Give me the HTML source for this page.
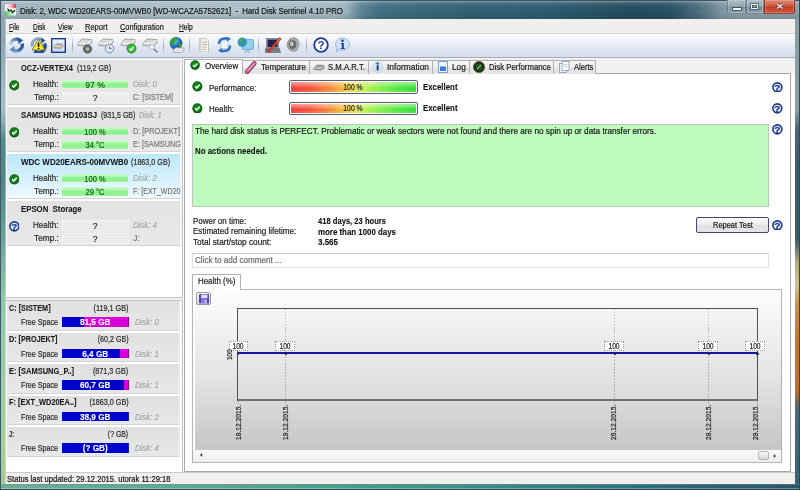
<!DOCTYPE html>
<html><head><meta charset="utf-8"><style>
*{margin:0;padding:0;box-sizing:border-box}
html,body{width:800px;height:490px;overflow:hidden;background:#9db2bd}
body{position:relative;font-family:"Liberation Sans",sans-serif;color:#1e1e1e}
.a{position:absolute}
.t{position:absolute;white-space:nowrap;line-height:1;-webkit-text-stroke:0.2px currentColor}
.t.b{-webkit-text-stroke:0.1px currentColor}
.b{font-weight:bold}
.gray{color:#7a7a7a}
.it{font-style:italic;color:#a8a8a8}
.chk{position:absolute;width:11px;height:11px;border-radius:50%;background:radial-gradient(circle at 50% 45%,#1e8a1e 0,#0e6a0e 55%,#054005 100%)}
.chk:after{content:"";position:absolute;left:3px;top:2.2px;width:5px;height:2.6px;border-left:1.8px solid #e8ffe8;border-bottom:1.8px solid #e8ffe8;transform:rotate(-45deg)}
.q{position:absolute;width:11px;height:11px;border-radius:50%;border:1.4px solid #234a9e;background:radial-gradient(#fff 50%,#dfe8f8);}
.q:after{content:"?";position:absolute;left:0;right:0;top:0.5px;text-align:center;font:bold 8px/8px "Liberation Sans",sans-serif;color:#234a9e}
.gbar{position:absolute;background:linear-gradient(#d2f9d2 0,#a6f3a6 30%,#86ec86 55%,#92ee92 80%,#b8f3b8 100%);color:#1a5a1a;text-align:center;line-height:1}
.ebar{position:absolute;background:linear-gradient(#f0f0f0,#e6e6e6);border:1px solid #f8f8f8;color:#333;text-align:center;line-height:1}
.card{position:absolute;left:7px;width:174px;height:45px;background:linear-gradient(#e2e2e2,#e9e9e9);border-right:1px solid #f0f0f0;border-bottom:1px solid #d4d4d4}
.card.sel{background:linear-gradient(#bde7f9 0,#d4f0fb 50%,#eef9fe 100%)}
.vol{position:absolute;left:7px;width:173px;height:29.5px;background:linear-gradient(#e0e0e0,#e8e8e8);border-right:1px solid #f0f0f0;border-bottom:1px solid #d4d4d4}
.fs{position:absolute;background:#0000cc;color:#fff;font-weight:bold;text-align:center;line-height:1}
.tab{position:absolute;background:linear-gradient(#f6f6f6,#e2e2e2);border:1px solid #a2a2a2;border-bottom:none}
.pbar{position:absolute;border:1px solid #58606e;border-radius:2px;background:#fafafa;padding:1px}
.pbar>div{position:relative;width:100%;height:100%;background:linear-gradient(rgba(255,255,255,.5) 0,rgba(255,255,255,.2) 40%,rgba(255,255,255,0) 60%,rgba(255,255,255,.12) 100%),linear-gradient(90deg,#f03c3c 0,#f25038 15%,#f28a34 31%,#f2c040 43%,#e0e050 52%,#c0f050 58%,#88ee48 70%,#50e640 85%,#30e030 100%)}
</style></head><body><div style="position:absolute;left:0;top:0;width:800px;height:490px;overflow:hidden;filter:blur(0.4px)">
<div class="a " style="left:0px;top:0px;width:800px;height:490px;background:#8fa5b0"></div>
<div class="a " style="left:0px;top:0px;width:6px;height:490px;background:linear-gradient(#8fa5b0 0,#8fa5b0 40px,#9ab0ba 70px,#a8c0c8 105px,#8aaeb4 122px,#4e8a88 140px,#4a8886 175px,#5a9490 210px,#74aa9c 250px,#90c8a8 300px,#98cca4 360px,#a8d098 440px,#a0c890 490px)"></div>
<div class="a " style="left:5px;top:19px;width:1px;height:466px;background:rgba(255,255,255,.35)"></div>
<div class="a " style="left:794px;top:0px;width:6px;height:490px;background:linear-gradient(#8a9ea8 0,#8a9ea8 110px,#4a6676 130px,#3a5a6a 170px,#3c5c6a 240px,#b0aa80 262px,#cec690 285px,#c89050 305px,#c07830 340px,#b87030 390px,#4a6a78 410px,#3a6070 490px)"></div>
<div class="a " style="left:794px;top:19px;width:1px;height:466px;background:rgba(255,255,255,.5)"></div>
<div class="a " style="left:0px;top:484px;width:800px;height:6px;background:linear-gradient(90deg,#6aae90 0,#5aa88a 200px,#4aa088 320px,#3a8c84 480px,#2e7a80 600px,#2a6070 720px,#2a5868 800px)"></div>
<div class="a " style="left:0px;top:484px;width:800px;height:1px;background:rgba(120,140,150,.5)"></div>
<div class="a " style="left:0px;top:488px;width:800px;height:1px;background:rgba(255,255,255,.3)"></div>
<div class="a " style="left:0px;top:0px;width:800px;height:19px;background:linear-gradient(90deg,#9cb1bc 0,#a2b6c0 330px,#9ab0ba 346px,#5f8696 360px,#427083 380px,#3a687b 420px,#336174 470px,#2f5d72 540px,#2a5468 590px,#264b5f 630px,#2a5063 670px,#4d6f80 700px,#7d95a0 722px,#8a9ea8 740px,#8a9ea8 800px)"></div>
<div class="a " style="left:0px;top:0px;width:800px;height:19px;background:linear-gradient(rgba(255,255,255,0) 0,rgba(255,255,255,.22) 2px,rgba(255,255,255,.08) 4px,rgba(255,255,255,0) 8px,rgba(0,0,0,0) 12px,rgba(0,0,0,.07) 17px,rgba(0,0,0,.1) 19px)"></div>
<div class="a " style="left:0px;top:0px;width:800px;height:1px;background:#3a5564"></div>
<div class="a " style="left:0px;top:1px;width:800px;height:1px;background:rgba(255,255,255,.2)"></div>
<div class="a " style="left:0px;top:0px;width:1px;height:490px;background:#3f5a68"></div>
<div class="a " style="left:799px;top:0px;width:1px;height:490px;background:#2f4653"></div>
<div class="a " style="left:0px;top:489px;width:800px;height:1px;background:#2f4653"></div>
<div class="a " style="left:16px;top:3px;width:335px;height:14px;background:radial-gradient(ellipse 55% 70% at 50% 50%,rgba(190,205,212,.55) 0,rgba(180,198,206,.35) 75%,rgba(170,190,200,0) 100%)"></div>
<div class="t " style="left:20px;top:6.94px;font-size:8.42px;transform:scaleX(0.9226);transform-origin:0 0;color:#141414">Disk: 2, WDC WD20EARS-00MVWB0 [WD-WCAZA5752621]&nbsp; - &nbsp;Hard Disk Sentinel 4.10 PRO</div>
<svg class="a" style="left:5px;top:4.3px" width="11" height="11.5" viewBox="0 0 11 11.5"><defs><linearGradient id="ai1" x1="0" y1="0" x2="1" y2="0"><stop offset="0" stop-color="#f4f4fa"/><stop offset="0.5" stop-color="#f8c8d0"/><stop offset="1" stop-color="#e83048"/></linearGradient><linearGradient id="ai2" x1="0" y1="0" x2="1" y2="0"><stop offset="0" stop-color="#40d050"/><stop offset="0.55" stop-color="#b8f0b8"/><stop offset="1" stop-color="#f8f4fc"/></linearGradient></defs><rect x="0" y="0" width="11" height="4" fill="url(#ai1)"/><rect x="0" y="4" width="11" height="3.5" fill="#eef0ea"/><rect x="0" y="7.5" width="11" height="4" fill="url(#ai2)"/><path d="M2.5 4.5 L4 7 L6 6 L7.5 8.5 L10 6.2" fill="none" stroke="#1a2a1a" stroke-width="1.3"/></svg>
<div class="a " style="left:726.5px;top:0px;width:19px;height:13.5px;background:linear-gradient(#a9bac3 0,#98abb5 45%,#7a8e98 55%,#8ca0aa 100%);border:1px solid rgba(70,90,100,.45);border-top:none;border-radius:0 0 0 3px;box-shadow:inset 0 0 0 1px rgba(255,255,255,.22)"></div>
<div class="a " style="left:733px;top:7.5px;width:7.5px;height:2.2px;background:#f4f4f4;box-shadow:0 0 0 0.8px rgba(30,40,50,.7)"></div>
<div class="a " style="left:745.5px;top:0px;width:18px;height:13.5px;background:linear-gradient(#a9bac3 0,#98abb5 45%,#7a8e98 55%,#8ca0aa 100%);border:1px solid rgba(70,90,100,.45);border-top:none;box-shadow:inset 0 0 0 1px rgba(255,255,255,.22)"></div>
<div class="a " style="left:750.8px;top:4.2px;width:7px;height:5.3px;border:1px solid #f4f4f4;border-top-width:1.5px;box-shadow:0 0 0 0.7px rgba(30,40,50,.7),inset 0 0 0 0.7px rgba(30,40,50,.7)"></div>
<div class="a " style="left:763.5px;top:0px;width:31.5px;height:13.5px;background:linear-gradient(#dc8c7a 0,#d2664c 35%,#c43e22 55%,#d05a3e 100%);border:1px solid rgba(80,30,20,.6);border-top:none;border-radius:0 0 3px 0;box-shadow:inset 0 0 0 1px rgba(255,200,180,.3)"></div>
<svg class="a" style="left:775.8px;top:3.4px" width="7.5" height="6.5" viewBox="0 0 7.5 6.5"><path d="M1 1 L6.5 5.5 M6.5 1 L1 5.5" stroke="#5a2a20" stroke-width="2.4"/><path d="M1 1 L6.5 5.5 M6.5 1 L1 5.5" stroke="#fff" stroke-width="1.3"/></svg>
<div class="a " style="left:6px;top:19px;width:789px;height:1px;background:rgba(40,60,70,.45)"></div>
<div class="a " style="left:6px;top:19px;width:789px;height:465px;background:#f0f0f0"></div>
<div class="a " style="left:6px;top:19px;width:789px;height:15px;background:#f0efed"></div>
<div class="a " style="left:6px;top:33px;width:789px;height:1px;background:#d6d2ce"></div>
<div class="t " style="left:9px;top:23.62px;font-size:8.21px;transform:scaleX(0.7934);transform-origin:0 0;color:#1a1a1a"><u>F</u>ile</div>
<div class="t " style="left:32.5px;top:23.62px;font-size:8.21px;transform:scaleX(0.7828);transform-origin:0 0;color:#1a1a1a"><u>D</u>isk</div>
<div class="t " style="left:58px;top:23.62px;font-size:8.21px;transform:scaleX(0.8220);transform-origin:0 0;color:#1a1a1a"><u>V</u>iew</div>
<div class="t " style="left:85px;top:23.62px;font-size:8.21px;transform:scaleX(0.9131);transform-origin:0 0;color:#1a1a1a"><u>R</u>eport</div>
<div class="t " style="left:120px;top:23.62px;font-size:8.21px;transform:scaleX(0.8963);transform-origin:0 0;color:#1a1a1a"><u>C</u>onfiguration</div>
<div class="t " style="left:178.75px;top:23.62px;font-size:8.21px;transform:scaleX(0.8141);transform-origin:0 0;color:#1a1a1a"><u>H</u>elp</div>
<div class="a " style="left:6px;top:34px;width:789px;height:23px;background:linear-gradient(#fcfcfe 0,#eef1f8 35%,#dfe5f1 60%,#d6ddec 100%)"></div>
<div class="a " style="left:6px;top:57px;width:789px;height:1px;background:#a8afba"></div>
<div class="a " style="left:6px;top:58px;width:789px;height:1px;background:#e8ecf2"></div>
<div class="a " style="left:6px;top:59px;width:177px;height:238px;background:#fff"></div>
<div class="a " style="left:6px;top:297px;width:177px;height:3px;background:#f0f0f0"></div>
<div class="a " style="left:6px;top:300px;width:177px;height:172px;background:#fff"></div>
<div class="card" style="top:60px"></div>
<div class="t b" style="left:21.3px;top:64.14px;font-size:8.42px;transform:scaleX(0.8835);transform-origin:0 0;color:#1a1a1a">OCZ-VERTEX4</div>
<div class="t " style="left:77.2px;top:64.14px;font-size:8.42px;transform:scaleX(0.8395);transform-origin:0 0;color:#2a2a2a">(119,2 GB)</div>
<svg class="a" style="left:8.6px;top:80px" width="10.7" height="10.7" viewBox="0 0 10.7 10.7"><defs><radialGradient id="cg" cx="0.5" cy="0.45" r="0.55"><stop offset="0" stop-color="#23922a"/><stop offset="0.7" stop-color="#12701a"/><stop offset="1" stop-color="#06480a"/></radialGradient></defs><circle cx="5.35" cy="5.35" r="5.05" fill="url(#cg)"/><path d="M3.10 5.35 L4.71 7.06 L7.81 3.64" fill="none" stroke="#d8ffd8" stroke-width="1.60"/></svg>
<div class="t " style="left:32.8px;top:79.94px;font-size:8.42px;transform:scaleX(0.9534);transform-origin:0 0;color:#2a2a2a">Health:</div>
<div class="t " style="left:34px;top:93.14px;font-size:8.42px;transform:scaleX(0.9867);transform-origin:0 0;color:#2a2a2a">Temp.:</div>
<div class="a " style="left:62px;top:79.5px;width:66px;height:8.5px;background:linear-gradient(#d0fbd0 0,#b0f7b0 30%,#8cf28c 55%,#92f292 85%,#b0f4b0 100%)"></div>
<div class="t " style="left:-5px;width:200px;text-align:center;top:80.54px;font-size:8.42px;transform:scaleX(1.0275);transform-origin:50% 0;color:#0e560e;-webkit-text-stroke:0.15px #0e560e">97 %</div>
<div class="a " style="left:61.5px;top:92px;width:67px;height:11px;background:linear-gradient(#ededed,#e9e9e9);border:1px solid #f2f2f2"></div>
<div class="t " style="left:-5px;width:200px;text-align:center;top:93.94px;font-size:8.42px;color:#222">?</div>
<div class="t it" style="left:133px;top:79.94px;font-size:8.42px;transform:scaleX(0.9260);transform-origin:0 0;">Disk: 0</div>
<div class="t gray" style="left:133.3px;top:93.14px;font-size:8.42px;transform:scaleX(0.8540);transform-origin:0 0;">C: [SISTEM]</div>
<div class="card" style="top:107px"></div>
<div class="t b" style="left:21.3px;top:111.14px;font-size:8.42px;transform:scaleX(0.9295);transform-origin:0 0;color:#1a1a1a">SAMSUNG HD103SJ</div>
<div class="t " style="left:101px;top:111.14px;font-size:8.42px;transform:scaleX(0.8365);transform-origin:0 0;color:#2a2a2a">(931,5 GB)</div>
<svg class="a" style="left:8.6px;top:127px" width="10.7" height="10.7" viewBox="0 0 10.7 10.7"><defs><radialGradient id="cg" cx="0.5" cy="0.45" r="0.55"><stop offset="0" stop-color="#23922a"/><stop offset="0.7" stop-color="#12701a"/><stop offset="1" stop-color="#06480a"/></radialGradient></defs><circle cx="5.35" cy="5.35" r="5.05" fill="url(#cg)"/><path d="M3.10 5.35 L4.71 7.06 L7.81 3.64" fill="none" stroke="#d8ffd8" stroke-width="1.60"/></svg>
<div class="t " style="left:32.8px;top:126.94px;font-size:8.42px;transform:scaleX(0.9534);transform-origin:0 0;color:#2a2a2a">Health:</div>
<div class="t " style="left:34px;top:140.14px;font-size:8.42px;transform:scaleX(0.9867);transform-origin:0 0;color:#2a2a2a">Temp.:</div>
<div class="a " style="left:62px;top:126.5px;width:66px;height:8.5px;background:linear-gradient(#d0fbd0 0,#b0f7b0 30%,#8cf28c 55%,#92f292 85%,#b0f4b0 100%)"></div>
<div class="t " style="left:-5px;width:200px;text-align:center;top:127.54px;font-size:8.42px;transform:scaleX(0.8975);transform-origin:50% 0;color:#0e560e;-webkit-text-stroke:0.15px #0e560e">100 %</div>
<div class="a " style="left:62px;top:140px;width:66px;height:8.5px;background:linear-gradient(#d0fbd0 0,#b0f7b0 30%,#8cf28c 55%,#92f292 85%,#b0f4b0 100%)"></div>
<div class="t " style="left:-5px;width:200px;text-align:center;top:140.94px;font-size:8.42px;transform:scaleX(0.8994);transform-origin:50% 0;color:#0e560e;-webkit-text-stroke:0.15px #0e560e">34 °C</div>
<div class="t gray" style="left:133.3px;top:126.94px;font-size:8.42px;transform:scaleX(0.8674);transform-origin:0 0;">D: [PROJEKT]</div>
<div class="t gray" style="left:133.3px;top:140.14px;font-size:8.42px;transform:scaleX(0.8707);transform-origin:0 0;">E: [SAMSUNG</div>
<div class="card sel" style="top:154px"></div>
<div class="t b" style="left:21.3px;top:158.14px;font-size:8.42px;transform:scaleX(0.9524);transform-origin:0 0;color:#1a1a1a">WDC WD20EARS-00MVWB0</div>
<div class="t " style="left:131.4px;top:158.14px;font-size:8.42px;transform:scaleX(0.8538);transform-origin:0 0;color:#2a2a2a">(1863,0 GB)</div>
<svg class="a" style="left:8.6px;top:174px" width="10.7" height="10.7" viewBox="0 0 10.7 10.7"><defs><radialGradient id="cg" cx="0.5" cy="0.45" r="0.55"><stop offset="0" stop-color="#23922a"/><stop offset="0.7" stop-color="#12701a"/><stop offset="1" stop-color="#06480a"/></radialGradient></defs><circle cx="5.35" cy="5.35" r="5.05" fill="url(#cg)"/><path d="M3.10 5.35 L4.71 7.06 L7.81 3.64" fill="none" stroke="#d8ffd8" stroke-width="1.60"/></svg>
<div class="t " style="left:32.8px;top:173.94px;font-size:8.42px;transform:scaleX(0.9534);transform-origin:0 0;color:#2a2a2a">Health:</div>
<div class="t " style="left:34px;top:187.14px;font-size:8.42px;transform:scaleX(0.9867);transform-origin:0 0;color:#2a2a2a">Temp.:</div>
<div class="a " style="left:62px;top:173.5px;width:66px;height:8.5px;background:linear-gradient(#d0fbd0 0,#b0f7b0 30%,#8cf28c 55%,#92f292 85%,#b0f4b0 100%)"></div>
<div class="t " style="left:-5px;width:200px;text-align:center;top:174.54px;font-size:8.42px;transform:scaleX(0.8975);transform-origin:50% 0;color:#0e560e;-webkit-text-stroke:0.15px #0e560e">100 %</div>
<div class="a " style="left:62px;top:187px;width:66px;height:8.5px;background:linear-gradient(#d0fbd0 0,#b0f7b0 30%,#8cf28c 55%,#92f292 85%,#b0f4b0 100%)"></div>
<div class="t " style="left:-5px;width:200px;text-align:center;top:187.94px;font-size:8.42px;transform:scaleX(0.8994);transform-origin:50% 0;color:#0e560e;-webkit-text-stroke:0.15px #0e560e">29 °C</div>
<div class="t it" style="left:133px;top:173.94px;font-size:8.42px;transform:scaleX(0.9260);transform-origin:0 0;">Disk: 2</div>
<div class="t gray" style="left:133.3px;top:187.14px;font-size:8.42px;transform:scaleX(0.8402);transform-origin:0 0;">F: [EXT_WD20</div>
<div class="card" style="top:201px"></div>
<div class="t b" style="left:21.3px;top:205.14px;font-size:8.42px;transform:scaleX(0.9265);transform-origin:0 0;color:#1a1a1a">EPSON&nbsp;&nbsp;Storage</div>
<svg class="a" style="left:8.6px;top:221px" width="10.7" height="10.7" viewBox="0 0 10.7 10.7"><defs><radialGradient id="qg" cx="0.45" cy="0.4" r="0.6"><stop offset="0" stop-color="#fff"/><stop offset="1" stop-color="#d8e4f4"/></radialGradient></defs><circle cx="5.35" cy="5.35" r="4.5" fill="url(#qg)" stroke="#1c3a8e" stroke-width="1.6"/><text x="5.35" y="8.99" text-anchor="middle" font-family="Liberation Sans" font-weight="bold" font-size="9.84" fill="#1c3a8e" stroke="#1c3a8e" stroke-width="0.3">?</text></svg>
<div class="t " style="left:32.8px;top:220.94px;font-size:8.42px;transform:scaleX(0.9534);transform-origin:0 0;color:#2a2a2a">Health:</div>
<div class="t " style="left:34px;top:234.14px;font-size:8.42px;transform:scaleX(0.9867);transform-origin:0 0;color:#2a2a2a">Temp.:</div>
<div class="a " style="left:61.5px;top:219.5px;width:67px;height:11px;background:linear-gradient(#ededed,#e9e9e9);border:1px solid #f2f2f2"></div>
<div class="t " style="left:-5px;width:200px;text-align:center;top:221.54px;font-size:8.42px;color:#222">?</div>
<div class="a " style="left:61.5px;top:233px;width:67px;height:11px;background:linear-gradient(#ededed,#e9e9e9);border:1px solid #f2f2f2"></div>
<div class="t " style="left:-5px;width:200px;text-align:center;top:234.94px;font-size:8.42px;color:#222">?</div>
<div class="t it" style="left:133px;top:220.94px;font-size:8.42px;transform:scaleX(0.9260);transform-origin:0 0;">Disk: 4</div>
<div class="t gray" style="left:133.3px;top:234.14px;font-size:8.42px;">J:</div>
<div class="t it" style="left:139px;top:111.14px;font-size:8.42px;transform:scaleX(0.8754);transform-origin:0 0;">Disk: 1</div>
<div class="vol" style="top:301px"></div>
<div class="t b" style="left:9px;top:304.72px;font-size:8.21px;transform:scaleX(0.8863);transform-origin:0 0;color:#1a1a1a">C: [SISTEM]</div>
<div class="t " style="right:671.7px;top:304.72px;font-size:8.21px;transform:scaleX(0.8857);transform-origin:100% 0;color:#2a2a2a">(119,1 GB)</div>
<div class="t " style="left:21px;top:319.32px;font-size:8.21px;transform:scaleX(0.8749);transform-origin:0 0;color:#2a2a2a">Free Space</div>
<div class="a " style="left:61.6px;top:317.2px;width:67px;height:9.6px;background:#0000cc;border-right:1px solid #202090"></div>
<div class="a " style="left:83.5px;top:317.2px;width:45.099999999999994px;height:9.6px;background:linear-gradient(#e000e0,#d000d0);border-right:1px solid #900090"></div>
<div class="t b" style="left:-4.799999999999997px;width:200px;text-align:center;top:319.22px;font-size:8.21px;color:#fff">81,5 GB</div>
<div class="t it" style="left:135px;top:319.32px;font-size:8.21px;transform:scaleX(0.9470);transform-origin:0 0;">Disk: 0</div>
<div class="vol" style="top:332.5px"></div>
<div class="t b" style="left:9px;top:336.22px;font-size:8.21px;transform:scaleX(0.8793);transform-origin:0 0;color:#1a1a1a">D: [PROJEKT]</div>
<div class="t " style="right:671.7px;top:336.22px;font-size:8.21px;transform:scaleX(0.8689);transform-origin:100% 0;color:#2a2a2a">(60,2 GB)</div>
<div class="t " style="left:21px;top:350.82px;font-size:8.21px;transform:scaleX(0.8749);transform-origin:0 0;color:#2a2a2a">Free Space</div>
<div class="a " style="left:61.6px;top:348.7px;width:67px;height:9.6px;background:#0000cc;border-right:1px solid #202090"></div>
<div class="a " style="left:119.5px;top:348.7px;width:9.099999999999994px;height:9.6px;background:linear-gradient(#e000e0,#d000d0);border-right:1px solid #900090"></div>
<div class="t b" style="left:-4.799999999999997px;width:200px;text-align:center;top:350.72px;font-size:8.21px;color:#fff">6,4 GB</div>
<div class="t it" style="left:135px;top:350.82px;font-size:8.21px;transform:scaleX(0.9470);transform-origin:0 0;">Disk: 1</div>
<div class="vol" style="top:364px"></div>
<div class="t b" style="left:9px;top:367.72px;font-size:8.21px;transform:scaleX(0.9115);transform-origin:0 0;color:#1a1a1a">E: [SAMSUNG_P..]</div>
<div class="t " style="right:671.7px;top:367.72px;font-size:8.21px;transform:scaleX(0.8773);transform-origin:100% 0;color:#2a2a2a">(871,3 GB)</div>
<div class="t " style="left:21px;top:382.32px;font-size:8.21px;transform:scaleX(0.8749);transform-origin:0 0;color:#2a2a2a">Free Space</div>
<div class="a " style="left:61.6px;top:380.2px;width:67px;height:9.6px;background:#0000cc;border-right:1px solid #202090"></div>
<div class="a " style="left:123.5px;top:380.2px;width:5.099999999999994px;height:9.6px;background:linear-gradient(#e000e0,#d000d0);border-right:1px solid #900090"></div>
<div class="t b" style="left:-4.799999999999997px;width:200px;text-align:center;top:382.22px;font-size:8.21px;color:#fff">60,7 GB</div>
<div class="t it" style="left:135px;top:382.32px;font-size:8.21px;transform:scaleX(0.9470);transform-origin:0 0;">Disk: 1</div>
<div class="vol" style="top:395.5px"></div>
<div class="t b" style="left:9px;top:399.22px;font-size:8.21px;transform:scaleX(0.9030);transform-origin:0 0;color:#1a1a1a">F: [EXT_WD20EA..]</div>
<div class="t " style="right:671.7px;top:399.22px;font-size:8.21px;transform:scaleX(0.8794);transform-origin:100% 0;color:#2a2a2a">(1863,0 GB)</div>
<div class="t " style="left:21px;top:413.82px;font-size:8.21px;transform:scaleX(0.8749);transform-origin:0 0;color:#2a2a2a">Free Space</div>
<div class="a " style="left:61.6px;top:411.7px;width:67px;height:9.6px;background:#0000cc;border-right:1px solid #202090"></div>
<div class="t b" style="left:-4.799999999999997px;width:200px;text-align:center;top:413.72px;font-size:8.21px;color:#fff">38,9 GB</div>
<div class="t it" style="left:135px;top:413.82px;font-size:8.21px;transform:scaleX(0.9470);transform-origin:0 0;">Disk: 2</div>
<div class="vol" style="top:427px"></div>
<div class="t b" style="left:9px;top:430.72px;font-size:8.21px;transform:scaleX(0.6852);transform-origin:0 0;color:#1a1a1a">J:</div>
<div class="t " style="right:671.7px;top:430.72px;font-size:8.21px;transform:scaleX(0.8398);transform-origin:100% 0;color:#2a2a2a">(? GB)</div>
<div class="t " style="left:21px;top:445.32px;font-size:8.21px;transform:scaleX(0.8749);transform-origin:0 0;color:#2a2a2a">Free Space</div>
<div class="a " style="left:61.6px;top:443.2px;width:67px;height:9.6px;background:#0000cc;border-right:1px solid #202090"></div>
<div class="t b" style="left:-4.799999999999997px;width:200px;text-align:center;top:445.22px;font-size:8.21px;color:#fff">(? GB)</div>
<div class="t it" style="left:135px;top:445.32px;font-size:8.21px;transform:scaleX(0.9470);transform-origin:0 0;">Disk: 4</div>
<div class="a " style="left:181px;top:59px;width:3px;height:413px;background:#fafafa"></div>
<div class="a " style="left:182px;top:59px;width:1px;height:238px;background:#c2c2c2"></div>
<div class="a " style="left:6px;top:296.5px;width:177px;height:1px;background:#c8c8c8"></div>
<div class="a " style="left:6px;top:300px;width:177px;height:1px;background:#c8c8c8"></div>
<div class="a " style="left:182px;top:300px;width:1px;height:172px;background:#c2c2c2"></div>
<div class="a " style="left:6px;top:472px;width:789px;height:12px;background:#f0efed"></div>
<div class="a " style="left:6px;top:471.5px;width:789px;height:1px;background:#cdcac6"></div>
<div class="t " style="left:7.1px;top:476.12px;font-size:8.21px;transform:scaleX(0.9241);transform-origin:0 0;color:#111">Status last updated: 29.12.2015. utorak 11:29:18</div>
<div class="a " style="left:184px;top:58px;width:611px;height:414px;background:#fff"></div>
<div class="a " style="left:71.5px;top:37px;width:1px;height:18px;background:linear-gradient(#e4e8ef,#9ea6b4 50%,#e4e8ef)"></div>
<div class="a " style="left:162.7px;top:37px;width:1px;height:18px;background:linear-gradient(#e4e8ef,#9ea6b4 50%,#e4e8ef)"></div>
<div class="a " style="left:188.8px;top:37px;width:1px;height:18px;background:linear-gradient(#e4e8ef,#9ea6b4 50%,#e4e8ef)"></div>
<div class="a " style="left:258.2px;top:37px;width:1px;height:18px;background:linear-gradient(#e4e8ef,#9ea6b4 50%,#e4e8ef)"></div>
<div class="a " style="left:306.4px;top:37px;width:1px;height:18px;background:linear-gradient(#e4e8ef,#9ea6b4 50%,#e4e8ef)"></div>
<svg class="a" style="left:7.5px;top:37px" width="17" height="16" viewBox="0 0 17 16"><defs><linearGradient id="rf1" x1="0" y1="1" x2="1" y2="0"><stop offset="0" stop-color="#e4ecf4"/><stop offset="0.5" stop-color="#8aa8c8"/><stop offset="1" stop-color="#2c5c98"/></linearGradient><linearGradient id="rf2" x1="1" y1="0" x2="0" y2="1"><stop offset="0" stop-color="#2a5890"/><stop offset="0.6" stop-color="#3a6aa8"/><stop offset="1" stop-color="#9ab8d8"/></linearGradient></defs><path d="M2.6 9.6 A6 6 0 0 1 11.2 2.9" fill="none" stroke="url(#rf1)" stroke-width="3.4"/><path d="M9.6 0.2 L15.2 3.2 L10.6 7.2Z" fill="#2c5c98"/><path d="M14.2 6.6 A6 6 0 0 1 5.6 13.3" fill="none" stroke="url(#rf2)" stroke-width="3.4"/><path d="M7.2 16 L1.6 12.8 L6.2 9Z" fill="#5a88b8"/></svg>
<svg class="a" style="left:29.5px;top:37px" width="17" height="16" viewBox="0 0 17 16"><path d="M2.4 9.5 A6.2 6.2 0 0 1 12 2.8" fill="none" stroke="#8aa8c8" stroke-width="2.8"/><path d="M14.4 6.5 A6.2 6.2 0 0 1 4.6 13.8" fill="none" stroke="#23508e" stroke-width="3.4"/><path d="M11 0.5 L15.5 3.5 L11.5 6.5Z" fill="#23508e"/><path d="M8.5 2.2 L15 13 L2 13Z" fill="#f4ec1a" stroke="#5a5a28" stroke-width="0.7" stroke-linejoin="round"/><rect x="7.8" y="5.6" width="1.5" height="4.4" fill="#111"/><rect x="7.8" y="10.8" width="1.5" height="1.5" fill="#111"/></svg>
<svg class="a" style="left:51.2px;top:38px" width="15" height="15" viewBox="0 0 15 15"><defs><linearGradient id="gbx" x1="0" y1="0" x2="0" y2="1"><stop offset="0" stop-color="#eaf5ff"/><stop offset="1" stop-color="#c4dcf4"/></linearGradient></defs><rect x="0.7" y="0.7" width="13.6" height="13.6" fill="url(#gbx)" stroke="#1a3a8a" stroke-width="1.4"/><path d="M3 8.2 L5.6 5.6 L12 6 L12 8.4 L9.4 10.4 L3 10Z" fill="#c0b4a8" stroke="#7a6a60" stroke-width="0.5"/><path d="M3 8.2 L9.4 8.6 L12 6.1" fill="none" stroke="#f4f0ec" stroke-width="0.7"/></svg>
<svg class="a" style="left:77px;top:37px" width="17" height="17" viewBox="0 0 17 17"><path d="M1 6 L5 2 L15 2.5 L15 6 L11 9 L1 8.5Z" fill="#d8d8d8" stroke="#8a8a8a" stroke-width="0.7"/><path d="M1 6 L11 6.5 L15 2.8" fill="none" stroke="#fff" stroke-width="0.8"/><circle cx="10.5" cy="12" r="4.2" fill="#6e6e6e" stroke="#444" stroke-width="0.7"/><circle cx="10.5" cy="12" r="1.8" fill="#b8b8b8"/></svg>
<svg class="a" style="left:98px;top:37px" width="17" height="17" viewBox="0 0 17 17"><path d="M1 6 L5 2 L15 2.5 L15 6 L11 9 L1 8.5Z" fill="#d8d8d8" stroke="#8a8a8a" stroke-width="0.7"/><path d="M1 6 L11 6.5 L15 2.8" fill="none" stroke="#fff" stroke-width="0.8"/><circle cx="11.5" cy="11.5" r="4.3" fill="#dde8f2" stroke="#7090a8" stroke-width="1"/><path d="M11.5 9 V11.5 H13.5" stroke="#406080" stroke-width="0.8" fill="none"/></svg>
<svg class="a" style="left:120px;top:37px" width="17" height="17" viewBox="0 0 17 17"><path d="M1 6 L5 2 L15 2.5 L15 6 L11 9 L1 8.5Z" fill="#d8d8d8" stroke="#8a8a8a" stroke-width="0.7"/><path d="M1 6 L11 6.5 L15 2.8" fill="none" stroke="#fff" stroke-width="0.8"/><circle cx="11.5" cy="11.5" r="4.5" fill="#3cb83c" stroke="#1a7a1a" stroke-width="0.8"/><path d="M9.3 11.6 L11 13.2 L13.8 9.8" stroke="#fff" stroke-width="1.3" fill="none"/></svg>
<svg class="a" style="left:142px;top:37px" width="17" height="17" viewBox="0 0 17 17"><path d="M1 6 L5 2 L15 2.5 L15 6 L11 9 L1 8.5Z" fill="#d8d8d8" stroke="#8a8a8a" stroke-width="0.7"/><path d="M1 6 L11 6.5 L15 2.8" fill="none" stroke="#fff" stroke-width="0.8"/><circle cx="10" cy="10" r="2.5" fill="#f4f8fc" stroke="#9ab" stroke-width="0.8"/><path d="M12 12 L15.5 15.5" stroke="#777" stroke-width="1.5"/></svg>
<svg class="a" style="left:167.5px;top:36px" width="18" height="18" viewBox="0 0 18 18"><defs><radialGradient id="glb" cx="0.35" cy="0.3" r="0.75"><stop offset="0" stop-color="#a8e0ff"/><stop offset="0.45" stop-color="#2a88d8"/><stop offset="1" stop-color="#0a3a90"/></radialGradient></defs><circle cx="8" cy="7.2" r="6.4" fill="url(#glb)"/><path d="M2.2 5 Q4.5 1.2 8.5 1.2 Q10 3.5 7.5 5.5 Q5.5 6.5 6 9 Q3.5 10 2 8Z" fill="#3aa03a"/><path d="M10 7 Q13.5 6 14.2 8.5 Q13 11.5 10.5 11Z" fill="#3a9a3a"/><path d="M5 14 L8 11.5 L16 12 L16 14.2 L13 16.6 L5 16.2Z" fill="#e8e8e8" stroke="#8a8a8a" stroke-width="0.6"/></svg>
<svg class="a" style="left:198.5px;top:37.5px" width="10" height="14.5" viewBox="0 0 10 14.5"><path d="M0.5 0.5 H7 L9.5 3 V14 H0.5Z" fill="#f6f4ec" stroke="#b0aa98" stroke-width="0.7"/><rect x="0.5" y="0.5" width="2" height="13.5" fill="#d8d2c0"/><path d="M3.5 4H8M3.5 6.5H8M3.5 9H8M3.5 11.5H7" stroke="#9a9a9a" stroke-width="0.8"/></svg>
<svg class="a" style="left:216.5px;top:37px" width="15" height="15.5" viewBox="0 0 15 15.5"><rect x="4" y="4" width="7" height="7.5" fill="#f4f6f8" stroke="#a8b4c0" stroke-width="0.6"/><path d="M2 7 Q2 1.5 8 1.5 L10.5 1.5" fill="none" stroke="#2a72c8" stroke-width="2.4"/><path d="M10 -0.5 L14 2 L10 4.5Z" fill="#2a72c8"/><path d="M13 8.5 Q13 14 7 14 L4.5 14" fill="none" stroke="#2a72c8" stroke-width="2.4"/><path d="M5 11 L1 13.5 L5 16Z" fill="#2a72c8"/></svg>
<svg class="a" style="left:237px;top:37px" width="18" height="17" viewBox="0 0 18 17"><rect x="5" y="2.5" width="11.5" height="10" rx="1" fill="#90d0f4" stroke="#5aa0d8" stroke-width="0.8"/><path d="M8 13 H13 L14 16 H7Z" fill="#b8c8d8"/><circle cx="5.2" cy="5.2" r="4.6" fill="#2a8ad8"/><path d="M1.5 3.8 Q3.5 1 6 1.2 Q6.5 4 4.5 5 Q3.5 7.5 1.2 6.5Z M6.8 5 Q9.5 4.8 9.6 6.5 Q8 8.8 6.8 8Z" fill="#4ab04a"/></svg>
<svg class="a" style="left:265px;top:37px" width="17" height="17" viewBox="0 0 17 17"><rect x="1.5" y="1.5" width="12" height="9.5" fill="#9a9aa8" stroke="#6a6a78" stroke-width="0.6"/><rect x="2.6" y="2.6" width="9.8" height="7.3" fill="#1e2250"/><path d="M0.5 11.5 H14.5 L15.5 15.5 H0Z" fill="#7a7a80" stroke="#555" stroke-width="0.5"/><path d="M3 15 L15.5 1.2" stroke="#8a1a10" stroke-width="2.6"/><path d="M3 15 L15.5 1.2" stroke="#e04a30" stroke-width="1.6"/><path d="M12 5 L15 1.8" stroke="#ffd0c0" stroke-width="0.6"/></svg>
<svg class="a" style="left:286px;top:37px" width="17" height="16" viewBox="0 0 17 16"><ellipse cx="7.5" cy="7.5" rx="6.3" ry="6.8" fill="#a8a8a8" stroke="#7a7a7a" stroke-width="0.7"/><ellipse cx="6.5" cy="7.5" rx="3.8" ry="4.6" fill="#6a6a6a"/><ellipse cx="5.8" cy="7" rx="1.8" ry="2.4" fill="#c8c8c8"/><path d="M12 3 Q15.5 7.5 12 12.5" fill="none" stroke="#d8d8d8" stroke-width="1.2"/></svg>
<svg class="a" style="left:313px;top:37px" width="16" height="16" viewBox="0 0 16 16"><circle cx="8" cy="8" r="6.8" fill="#fff" stroke="#1c3c94" stroke-width="1.8"/><text x="8" y="12.2" text-anchor="middle" font-family="Liberation Sans" font-weight="bold" font-size="11" fill="#1c3c94">?</text></svg>
<svg class="a" style="left:334px;top:37px" width="17" height="16" viewBox="0 0 17 16"><path d="M8.5 1 A7 6.2 0 1 1 5 12.5 L2 15 L3 11 A7 6.2 0 0 1 8.5 1Z" fill="#cfe4f8" stroke="#8ab0d8" stroke-width="0.8"/><circle cx="8.5" cy="3.8" r="1.3" fill="#1a3a8a"/><path d="M7 6 H9.8 V11 H10.8 V12 H6.8 V11 H7.8 V7 H7Z" fill="#1a3a8a"/></svg>
<div class="a " style="left:184px;top:58px;width:611px;height:15px;background:#f0f0f0"></div>
<div class="a " style="left:184px;top:73px;width:607px;height:399px;background:#fff;border:1px solid #a8a8a8"></div>
<div class="a " style="left:242px;top:60.4px;width:67.60000000000002px;height:13.6px;background:linear-gradient(#f9f9f9,#ececec 50%,#e0e0e0 51%,#e6e6e6);border:1px solid #b0b0b0;border-bottom:none;border-left:none"></div>
<div class="t " style="left:260.5px;top:63.06px;font-size:8.64px;transform:scaleX(0.9293);transform-origin:0 0;color:#1a1a1a">Temperature</div>
<div class="a " style="left:309.6px;top:60.4px;width:59.0px;height:13.6px;background:linear-gradient(#f9f9f9,#ececec 50%,#e0e0e0 51%,#e6e6e6);border:1px solid #b0b0b0;border-bottom:none;border-left:none"></div>
<div class="t " style="left:328px;top:63.06px;font-size:8.64px;transform:scaleX(0.8976);transform-origin:0 0;color:#1a1a1a">S.M.A.R.T.</div>
<div class="a " style="left:368.6px;top:60.4px;width:64.39999999999998px;height:13.6px;background:linear-gradient(#f9f9f9,#ececec 50%,#e0e0e0 51%,#e6e6e6);border:1px solid #b0b0b0;border-bottom:none;border-left:none"></div>
<div class="t " style="left:387px;top:63.06px;font-size:8.64px;transform:scaleX(0.9732);transform-origin:0 0;color:#1a1a1a">Information</div>
<div class="a " style="left:433px;top:60.4px;width:36.60000000000002px;height:13.6px;background:linear-gradient(#f9f9f9,#ececec 50%,#e0e0e0 51%,#e6e6e6);border:1px solid #b0b0b0;border-bottom:none;border-left:none"></div>
<div class="t " style="left:451.8px;top:63.06px;font-size:8.64px;transform:scaleX(0.9590);transform-origin:0 0;color:#1a1a1a">Log</div>
<div class="a " style="left:469.6px;top:60.4px;width:84.79999999999995px;height:13.6px;background:linear-gradient(#f9f9f9,#ececec 50%,#e0e0e0 51%,#e6e6e6);border:1px solid #b0b0b0;border-bottom:none;border-left:none"></div>
<div class="t " style="left:488.6px;top:63.06px;font-size:8.64px;transform:scaleX(0.9016);transform-origin:0 0;color:#1a1a1a">Disk Performance</div>
<div class="a " style="left:554.4px;top:60.4px;width:41.200000000000045px;height:13.6px;background:linear-gradient(#f9f9f9,#ececec 50%,#e0e0e0 51%,#e6e6e6);border:1px solid #b0b0b0;border-bottom:none;border-left:none"></div>
<div class="t " style="left:573.6px;top:63.06px;font-size:8.64px;transform:scaleX(0.8799);transform-origin:0 0;color:#1a1a1a">Alerts</div>
<div class="a " style="left:184px;top:59px;width:58.5px;height:15px;background:#fff;border:1px solid #b4b4b4;border-bottom:none"></div>
<div class="a " style="left:185px;top:73px;width:57px;height:1.5px;background:#fff"></div>
<svg class="a" style="left:189.8px;top:60px" width="10.2" height="10.2" viewBox="0 0 10.2 10.2"><defs><radialGradient id="cg" cx="0.5" cy="0.45" r="0.55"><stop offset="0" stop-color="#23922a"/><stop offset="0.7" stop-color="#12701a"/><stop offset="1" stop-color="#06480a"/></radialGradient></defs><circle cx="5.1" cy="5.1" r="4.8" fill="url(#cg)"/><path d="M2.96 5.10 L4.49 6.73 L7.45 3.47" fill="none" stroke="#d8ffd8" stroke-width="1.53"/></svg>
<div class="t " style="left:204.5px;top:61.86px;font-size:8.64px;transform:scaleX(0.9262);transform-origin:0 0;color:#1a1a1a">Overview</div>
<svg class="a" style="left:245px;top:60.5px" width="13" height="13" viewBox="0 0 13 13"><path d="M2.2 10.8 L9.3 2.4" stroke="#6a2040" stroke-width="4.4" stroke-linecap="round"/><path d="M2.2 10.8 L9.3 2.4" stroke="#d070a0" stroke-width="3" stroke-linecap="round"/><path d="M3.5 8.8 L8.8 2.6" stroke="#f4c8dc" stroke-width="0.9" stroke-linecap="round"/></svg>
<svg class="a" style="left:313px;top:62.5px" width="12" height="8" viewBox="0 0 12 8"><path d="M1 5 L4 2 L11 2.5 L11 5 L8 7 L1 6.5Z" fill="#a8a8a8" stroke="#555" stroke-width="0.6"/><path d="M1 5 L8 5.5 L11 2.7" fill="none" stroke="#eee" stroke-width="0.6"/></svg>
<svg class="a" style="left:372px;top:61px" width="11" height="13" viewBox="0 0 11 13"><path d="M5.5 0.8 A4.8 4.6 0 1 1 3.6 9.2 L5.2 12.2 L2.2 8.6 A4.8 4.6 0 0 1 5.5 0.8Z" fill="#d4e8fa" stroke="#a8c4e0" stroke-width="0.6"/><circle cx="5.6" cy="2.6" r="1.1" fill="#1a3a80"/><rect x="4.7" y="4.3" width="1.9" height="5" fill="#1a3a80"/></svg>
<svg class="a" style="left:438px;top:61px" width="10" height="12" viewBox="0 0 10 12"><rect x="0.5" y="0.5" width="9" height="11" fill="#eef4fb" stroke="#6a8ac0" stroke-width="0.8"/><rect x="2" y="5.5" width="6" height="4.5" fill="#3a7ad8"/></svg>
<svg class="a" style="left:473px;top:61px" width="12" height="12" viewBox="0 0 12 12"><circle cx="6" cy="6" r="5.6" fill="#1e2a1a" stroke="#6a5030" stroke-width="0.8"/><circle cx="6" cy="6" r="3.6" fill="#1a5a1a"/><path d="M4 8 L8 4" stroke="#e0e0e0" stroke-width="0.9"/></svg>
<svg class="a" style="left:559px;top:61px" width="11" height="12" viewBox="0 0 11 12"><rect x="0.5" y="2.5" width="7" height="9" fill="#f0f4fa" stroke="#6a8ab8" stroke-width="0.7"/><rect x="3" y="0.5" width="7" height="9" fill="#fff" stroke="#6a8ab8" stroke-width="0.7"/><path d="M4.5 3.5H8.5M4.5 5.5H8.5" stroke="#9ab" stroke-width="0.6"/></svg>
<svg class="a" style="left:192.2px;top:81.1px" width="10.7" height="10.7" viewBox="0 0 10.7 10.7"><defs><radialGradient id="cg" cx="0.5" cy="0.45" r="0.55"><stop offset="0" stop-color="#23922a"/><stop offset="0.7" stop-color="#12701a"/><stop offset="1" stop-color="#06480a"/></radialGradient></defs><circle cx="5.35" cy="5.35" r="5.05" fill="url(#cg)"/><path d="M3.10 5.35 L4.71 7.06 L7.81 3.64" fill="none" stroke="#d8ffd8" stroke-width="1.60"/></svg>
<div class="t " style="left:208.75px;top:84.06px;font-size:8.64px;transform:scaleX(0.9125);transform-origin:0 0;color:#222">Performance:</div>
<div class="pbar" style="left:289px;top:80.2px;width:129px;height:13.4px"><div></div></div>
<div class="t " style="left:253.2px;width:200px;text-align:center;top:82.60px;font-size:9.18px;transform:scaleX(0.7495);transform-origin:50% 0;color:#222">100 %</div>
<div class="t b" style="left:422.5px;top:83.06px;font-size:8.64px;transform:scaleX(0.9109);transform-origin:0 0;color:#111">Excellent</div>
<svg class="a" style="left:192.2px;top:102.6px" width="10.7" height="10.7" viewBox="0 0 10.7 10.7"><defs><radialGradient id="cg" cx="0.5" cy="0.45" r="0.55"><stop offset="0" stop-color="#23922a"/><stop offset="0.7" stop-color="#12701a"/><stop offset="1" stop-color="#06480a"/></radialGradient></defs><circle cx="5.35" cy="5.35" r="5.05" fill="url(#cg)"/><path d="M3.10 5.35 L4.71 7.06 L7.81 3.64" fill="none" stroke="#d8ffd8" stroke-width="1.60"/></svg>
<div class="t " style="left:208.75px;top:105.26px;font-size:8.64px;transform:scaleX(0.9148);transform-origin:0 0;color:#222">Health:</div>
<div class="pbar" style="left:289px;top:101.6px;width:129px;height:13.4px"><div></div></div>
<div class="t " style="left:253.2px;width:200px;text-align:center;top:103.90px;font-size:9.18px;transform:scaleX(0.7495);transform-origin:50% 0;color:#222">100 %</div>
<div class="t b" style="left:422.5px;top:104.36px;font-size:8.64px;transform:scaleX(0.9109);transform-origin:0 0;color:#111">Excellent</div>
<svg class="a" style="left:772.4px;top:81.6px" width="10.7" height="10.7" viewBox="0 0 10.7 10.7"><defs><radialGradient id="qg" cx="0.45" cy="0.4" r="0.6"><stop offset="0" stop-color="#fff"/><stop offset="1" stop-color="#d8e4f4"/></radialGradient></defs><circle cx="5.35" cy="5.35" r="4.5" fill="url(#qg)" stroke="#1c3a8e" stroke-width="1.6"/><text x="5.35" y="8.99" text-anchor="middle" font-family="Liberation Sans" font-weight="bold" font-size="9.84" fill="#1c3a8e" stroke="#1c3a8e" stroke-width="0.3">?</text></svg>
<svg class="a" style="left:772.4px;top:103px" width="10.7" height="10.7" viewBox="0 0 10.7 10.7"><defs><radialGradient id="qg" cx="0.45" cy="0.4" r="0.6"><stop offset="0" stop-color="#fff"/><stop offset="1" stop-color="#d8e4f4"/></radialGradient></defs><circle cx="5.35" cy="5.35" r="4.5" fill="url(#qg)" stroke="#1c3a8e" stroke-width="1.6"/><text x="5.35" y="8.99" text-anchor="middle" font-family="Liberation Sans" font-weight="bold" font-size="9.84" fill="#1c3a8e" stroke="#1c3a8e" stroke-width="0.3">?</text></svg>
<svg class="a" style="left:772.4px;top:124.4px" width="10.7" height="10.7" viewBox="0 0 10.7 10.7"><defs><radialGradient id="qg" cx="0.45" cy="0.4" r="0.6"><stop offset="0" stop-color="#fff"/><stop offset="1" stop-color="#d8e4f4"/></radialGradient></defs><circle cx="5.35" cy="5.35" r="4.5" fill="url(#qg)" stroke="#1c3a8e" stroke-width="1.6"/><text x="5.35" y="8.99" text-anchor="middle" font-family="Liberation Sans" font-weight="bold" font-size="9.84" fill="#1c3a8e" stroke="#1c3a8e" stroke-width="0.3">?</text></svg>
<div class="a " style="left:192px;top:124.2px;width:577px;height:83px;background:#bffabf;border:1px solid #b8c8b8"></div>
<div class="t " style="left:194.9px;top:127.45px;font-size:8.53px;transform:scaleX(0.9638);transform-origin:0 0;color:#141a14">The hard disk status is PERFECT. Problematic or weak sectors were not found and there are no spin up or data transfer errors.</div>
<div class="t b" style="left:194.9px;top:147.25px;font-size:8.53px;transform:scaleX(0.9222);transform-origin:0 0;color:#141a14">No actions needed.</div>
<div class="t " style="left:192.8px;top:216.56px;font-size:8.64px;transform:scaleX(0.9247);transform-origin:0 0;color:#222">Power on time:</div>
<div class="t " style="left:192.8px;top:227.36px;font-size:8.64px;transform:scaleX(0.9320);transform-origin:0 0;color:#222">Estimated remaining lifetime:</div>
<div class="t " style="left:192.8px;top:238.16px;font-size:8.64px;transform:scaleX(0.9563);transform-origin:0 0;color:#222">Total start/stop count:</div>
<div class="t b" style="left:318px;top:216.74px;font-size:8.42px;transform:scaleX(0.9038);transform-origin:0 0;color:#111">418 days, 23 hours</div>
<div class="t b" style="left:318px;top:227.54px;font-size:8.42px;transform:scaleX(0.9378);transform-origin:0 0;color:#111">more than 1000 days</div>
<div class="t b" style="left:318px;top:238.34px;font-size:8.42px;transform:scaleX(0.9503);transform-origin:0 0;color:#111">3.565</div>
<div class="a " style="left:696.25px;top:217.25px;width:72.75px;height:15.5px;background:linear-gradient(#fbfbfb,#ededed 45%,#e2e2e2 55%,#e6e6e6);border:1px solid #45457a;border-radius:2px"></div>
<div class="t " style="left:712.75px;top:221.09px;font-size:8.42px;transform:scaleX(0.8889);transform-origin:0 0;color:#1a1a1a">Repeat Test</div>
<svg class="a" style="left:772.3px;top:219.8px" width="10.7" height="10.7" viewBox="0 0 10.7 10.7"><defs><radialGradient id="qg" cx="0.45" cy="0.4" r="0.6"><stop offset="0" stop-color="#fff"/><stop offset="1" stop-color="#d8e4f4"/></radialGradient></defs><circle cx="5.35" cy="5.35" r="4.5" fill="url(#qg)" stroke="#1c3a8e" stroke-width="1.6"/><text x="5.35" y="8.99" text-anchor="middle" font-family="Liberation Sans" font-weight="bold" font-size="9.84" fill="#1c3a8e" stroke="#1c3a8e" stroke-width="0.3">?</text></svg>
<div class="a " style="left:192.2px;top:252.6px;width:577px;height:15px;background:#fff;border:1px solid #e2e2e2;border-top:1.5px solid #c8c8c8"></div>
<div class="t " style="left:195px;top:255.66px;font-size:8.64px;transform:scaleX(0.9361);transform-origin:0 0;color:#6a6a6a">Click to add comment ...</div>
<div class="a " style="left:192px;top:289px;width:590px;height:174px;background:#fff;border:1px solid #b4b4b4"></div>
<div class="a " style="left:192.2px;top:274.2px;width:48.5px;height:16px;background:#fff;border:1px solid #b4b4b4;border-bottom:none"></div>
<div class="t " style="left:198px;top:277.24px;font-size:8.42px;transform:scaleX(0.9416);transform-origin:0 0;color:#222">Health (%)</div>
<div class="a " style="left:195px;top:290px;width:586px;height:160px;background:linear-gradient(#fdfdfd 0,#f6f6f6 15%,#e4e4e4 55%,#cfcfcf 85%,#c6c6c6 100%)"></div>
<div class="a " style="left:193px;top:450px;width:588px;height:12px;background:linear-gradient(#fafafa,#eeeeee)"></div>
<div class="a " style="left:196.4px;top:292px;width:14.3px;height:13.3px;background:linear-gradient(#fafafa,#dedede);border:1px solid #9a9a9a;border-radius:2px"></div>
<svg class="a" style="left:198.5px;top:294px" width="10.5" height="9.5" viewBox="0 0 10.5 9.5"><rect x="0" y="0" width="10.5" height="9.5" rx="1" fill="#5040c0"/><rect x="2" y="0.6" width="6.5" height="3.8" fill="#e0d8fa"/><rect x="2.5" y="5.6" width="5.5" height="3.9" fill="#b8b0ee"/><rect x="3.6" y="6.5" width="1.5" height="2" fill="#5040c0"/></svg>
<div class="a " style="left:237.3px;top:308px;width:520.7px;height:93px;background:linear-gradient(#f4f4f4,#dcdcdc);border-top:1px solid #505050;border-left:1px solid #505050;border-right:1px solid #505050;border-bottom:2px solid #707070"></div>
<div class="a " style="left:285px;top:309px;width:1px;height:90px;background:repeating-linear-gradient(#b4b4b4 0,#b4b4b4 1.5px,transparent 1.5px,transparent 3px)"></div>
<div class="a " style="left:614px;top:309px;width:1px;height:90px;background:repeating-linear-gradient(#b4b4b4 0,#b4b4b4 1.5px,transparent 1.5px,transparent 3px)"></div>
<div class="a " style="left:708px;top:309px;width:1px;height:90px;background:repeating-linear-gradient(#b4b4b4 0,#b4b4b4 1.5px,transparent 1.5px,transparent 3px)"></div>
<div class="a " style="left:238px;top:401px;width:1px;height:3px;background:repeating-linear-gradient(#a0a0a0 0,#a0a0a0 1px,transparent 1px,transparent 2px)"></div>
<div class="a " style="left:285px;top:401px;width:1px;height:3px;background:repeating-linear-gradient(#a0a0a0 0,#a0a0a0 1px,transparent 1px,transparent 2px)"></div>
<div class="a " style="left:614px;top:401px;width:1px;height:3px;background:repeating-linear-gradient(#a0a0a0 0,#a0a0a0 1px,transparent 1px,transparent 2px)"></div>
<div class="a " style="left:708px;top:401px;width:1px;height:3px;background:repeating-linear-gradient(#a0a0a0 0,#a0a0a0 1px,transparent 1px,transparent 2px)"></div>
<div class="a " style="left:757px;top:401px;width:1px;height:3px;background:repeating-linear-gradient(#a0a0a0 0,#a0a0a0 1px,transparent 1px,transparent 2px)"></div>
<div class="a " style="left:238px;top:352.4px;width:519.5px;height:2px;background:#1414a0"></div>
<div class="a " style="left:236.8px;top:352.5px;width:2.6px;height:2.6px;background:#202040;border-radius:50%"></div>
<div class="a " style="left:284.6px;top:352.5px;width:2.6px;height:2.6px;background:#202040;border-radius:50%"></div>
<div class="a " style="left:613.5999999999999px;top:352.5px;width:2.6px;height:2.6px;background:#202040;border-radius:50%"></div>
<div class="a " style="left:707.5999999999999px;top:352.5px;width:2.6px;height:2.6px;background:#202040;border-radius:50%"></div>
<div class="a " style="left:756.0999999999999px;top:352.5px;width:2.6px;height:2.6px;background:#202040;border-radius:50%"></div>
<div class="a " style="left:228.6px;top:341.2px;width:19.30000000000001px;height:10px;background:#fff;border:1px dotted #9a9a9a"></div>
<div class="t " style="left:138.25px;width:200px;text-align:center;top:342.72px;font-size:8.21px;transform:scaleX(0.8183);transform-origin:50% 0;color:#222">100</div>
<div class="a " style="left:274.8px;top:341.2px;width:20.0px;height:10px;background:#fff;border:1px dotted #9a9a9a"></div>
<div class="t " style="left:184.8px;width:200px;text-align:center;top:342.72px;font-size:8.21px;transform:scaleX(0.8183);transform-origin:50% 0;color:#222">100</div>
<div class="a " style="left:603.8px;top:341.2px;width:20.0px;height:10px;background:#fff;border:1px dotted #9a9a9a"></div>
<div class="t " style="left:513.8px;width:200px;text-align:center;top:342.72px;font-size:8.21px;transform:scaleX(0.8183);transform-origin:50% 0;color:#222">100</div>
<div class="a " style="left:697.8px;top:341.2px;width:20.200000000000045px;height:10px;background:#fff;border:1px dotted #9a9a9a"></div>
<div class="t " style="left:607.9px;width:200px;text-align:center;top:342.72px;font-size:8.21px;transform:scaleX(0.8183);transform-origin:50% 0;color:#222">100</div>
<div class="a " style="left:745.4px;top:341.2px;width:20.0px;height:10px;background:#fff;border:1px dotted #9a9a9a"></div>
<div class="t " style="left:655.4px;width:200px;text-align:center;top:342.72px;font-size:8.21px;transform:scaleX(0.8183);transform-origin:50% 0;color:#222">100</div>
<div class="t" style="left:226.5px;top:360px;font-size:6.5px;color:#222;transform:rotate(-90deg);transform-origin:0 0">100</div>
<div class="t" style="left:235.00px;top:440px;font-size:8px;color:#222;transform:rotate(-90deg) scaleX(0.8352);transform-origin:0 0">18.12.2015.</div>
<div class="t" style="left:281.80px;top:440px;font-size:8px;color:#222;transform:rotate(-90deg) scaleX(0.8352);transform-origin:0 0">19.12.2015.</div>
<div class="t" style="left:610.40px;top:440px;font-size:8px;color:#222;transform:rotate(-90deg) scaleX(0.8352);transform-origin:0 0">26.12.2015.</div>
<div class="t" style="left:704.70px;top:440px;font-size:8px;color:#222;transform:rotate(-90deg) scaleX(0.8352);transform-origin:0 0">28.12.2015.</div>
<div class="t" style="left:752.40px;top:440px;font-size:8px;color:#222;transform:rotate(-90deg) scaleX(0.8352);transform-origin:0 0">29.12.2015.</div>
<div class="a " style="left:758px;top:451px;width:10.8px;height:8.8px;background:linear-gradient(#f8f8f8,#d8d8d8);border:1px solid #b4b4b4;border-radius:2px"></div>
<svg class="a" style="left:773px;top:452.5px" width="4" height="6" viewBox="0 0 4 6"><path d="M0.8 1 L3 3 L0.8 5Z" fill="#333"/></svg>
<svg class="a" style="left:199px;top:452px" width="4" height="6" viewBox="0 0 4 6"><path d="M3.2 1 L1 3 L3.2 5Z" fill="#333"/></svg>
</div></body></html>
